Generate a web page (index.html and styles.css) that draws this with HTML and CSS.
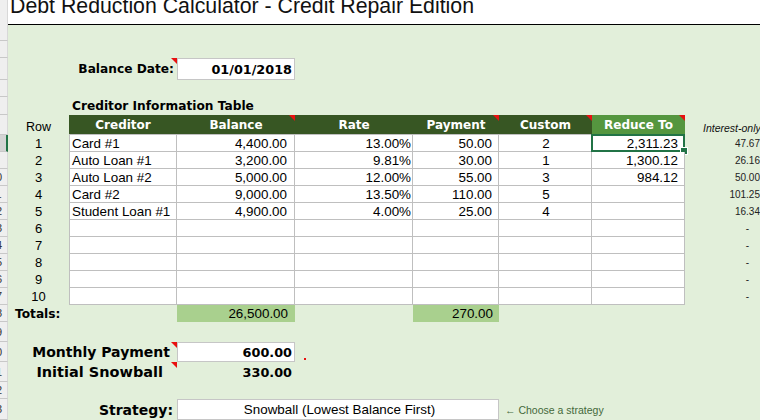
FILE: index.html
```html
<!DOCTYPE html>
<html>
<head>
<meta charset="utf-8">
<title>Debt Reduction Calculator</title>
<link rel="stylesheet" href="styles.css">
</head>
<body>
<div class="sheet">
  <div class="row r-title">
    <div class="hd top"></div>
    <div class="title-cell"><div class="title">Debt Reduction Calculator - Credit Repair Edition</div></div>
  </div>
  <div class="row h16"><div class="hd"></div></div>
  <div class="row h17"><div class="hd"></div></div>
  <div class="row h22">
    <div class="hd"></div>
    <div class="c r lbl-sm cm span-ab">Balance Date:</div>
    <div class="box r nb pad2">01/01/2018</div>
  </div>
  <div class="row h17"><div class="hd"></div></div>
  <div class="row h18">
    <div class="hd"></div>
    <div class="c lbl-md span-bd">Creditor Information Table</div>
  </div>
  <div class="row h20">
    <div class="hd"></div>
    <div class="c ctr rowlbl">Row</div>
    <div class="th">Creditor</div>
    <div class="th cm">Balance</div>
    <div class="th">Rate</div>
    <div class="th cm">Payment</div>
    <div class="th cm">Custom</div>
    <div class="th th2 cm">Reduce To</div>
    <div class="io-h">Interest-only</div>
  </div>

  <div class="row h17">
    <div class="hd sel-h"></div>
    <div class="c ctr rn">1</div>
    <div class="t first">Card #1</div>
    <div class="t r pad7">4,400.00</div>
    <div class="t r pad1">13.00%</div>
    <div class="t r pad6">50.00</div>
    <div class="t ctr">2</div>
    <div class="t r pad6 sel">2,311.23</div>
    <div class="c r io">47.67</div>
  </div>
  <div class="row h17">
    <div class="hd"></div>
    <div class="c ctr rn">2</div>
    <div class="t first">Auto Loan #1</div>
    <div class="t r pad7">3,200.00</div>
    <div class="t r pad1">9.81%</div>
    <div class="t r pad6">30.00</div>
    <div class="t ctr">1</div>
    <div class="t r pad6">1,300.12</div>
    <div class="c r io">26.16</div>
  </div>
  <div class="row h17">
    <div class="hd"><span>10</span></div>
    <div class="c ctr rn">3</div>
    <div class="t first">Auto Loan #2</div>
    <div class="t r pad7">5,000.00</div>
    <div class="t r pad1">12.00%</div>
    <div class="t r pad6">55.00</div>
    <div class="t ctr">3</div>
    <div class="t r pad6">984.12</div>
    <div class="c r io">50.00</div>
  </div>
  <div class="row h17">
    <div class="hd"><span>11</span></div>
    <div class="c ctr rn">4</div>
    <div class="t first">Card #2</div>
    <div class="t r pad7">9,000.00</div>
    <div class="t r pad1">13.50%</div>
    <div class="t r pad6">110.00</div>
    <div class="t ctr">5</div>
    <div class="t r pad6"></div>
    <div class="c r io">101.25</div>
  </div>
  <div class="row h17">
    <div class="hd"><span>12</span></div>
    <div class="c ctr rn">5</div>
    <div class="t first">Student Loan #1</div>
    <div class="t r pad7">4,900.00</div>
    <div class="t r pad1">4.00%</div>
    <div class="t r pad6">25.00</div>
    <div class="t ctr">4</div>
    <div class="t r pad6"></div>
    <div class="c r io">16.34</div>
  </div>
  <div class="row h17">
    <div class="hd"><span>13</span></div>
    <div class="c ctr rn">6</div>
    <div class="t first"></div><div class="t"></div><div class="t"></div><div class="t"></div><div class="t"></div><div class="t"></div>
    <div class="c r io dash">-</div>
  </div>
  <div class="row h17">
    <div class="hd"><span>14</span></div>
    <div class="c ctr rn">7</div>
    <div class="t first"></div><div class="t"></div><div class="t"></div><div class="t"></div><div class="t"></div><div class="t"></div>
    <div class="c r io dash">-</div>
  </div>
  <div class="row h17">
    <div class="hd"><span>15</span></div>
    <div class="c ctr rn">8</div>
    <div class="t first"></div><div class="t"></div><div class="t"></div><div class="t"></div><div class="t"></div><div class="t"></div>
    <div class="c r io dash">-</div>
  </div>
  <div class="row h17">
    <div class="hd"><span>16</span></div>
    <div class="c ctr rn">9</div>
    <div class="t first"></div><div class="t"></div><div class="t"></div><div class="t"></div><div class="t"></div><div class="t"></div>
    <div class="c r io dash">-</div>
  </div>
  <div class="row h17">
    <div class="hd"><span>17</span></div>
    <div class="c ctr rn">10</div>
    <div class="t first"></div><div class="t"></div><div class="t"></div><div class="t"></div><div class="t"></div><div class="t"></div>
    <div class="c r io dash">-</div>
  </div>

  <div class="row h17">
    <div class="hd"><span>18</span></div>
    <div class="c lbl-md tot">Totals:</div>
    <div></div>
    <div class="fill r pad7">26,500.00</div>
    <div></div>
    <div class="fill r pad6">270.00</div>
  </div>
  <div class="row h20"><div class="hd"><span>19</span></div></div>
  <div class="row h20">
    <div class="hd"><span>20</span></div>
    <div class="c r lbl-lg cm span-ab pr7">Monthly Payment</div>
    <div class="box r nb pad2">600.00</div>
    <div class="c"><i class="dot"></i></div>
  </div>
  <div class="row h20">
    <div class="hd"><span>21</span></div>
    <div class="c r lbl-lg lbl-wide cm span-ab pr13">Initial Snowball</div>
    <div class="c r nb pad3">330.00</div>
  </div>
  <div class="row h17"><div class="hd"><span>22</span></div></div>
  <div class="row h21">
    <div class="hd"><span>23</span></div>
    <div class="c r lbl-lg span-ab pr4">Strategy:</div>
    <div class="box ctr span-ce">Snowball (Lowest Balance First)</div>
    <div class="c hint col-f">&larr; Choose a strategy</div>
  </div>
</div>
</body>
</html>
```

FILE: styles.css
```css
* { box-sizing: border-box; }
html, body { margin: 0; padding: 0; }
body {
  width: 760px;
  height: 420px;
  overflow: hidden;
  background: #e2efda;
  font-family: "Liberation Sans", Arial, sans-serif;
  font-size: 13.4px;
  color: #000;
}
.sheet { width: 775px; }
.row {
  display: grid;
  grid-template-columns: 8px 61px 108px 118px 118px 86px 93px 93px 90px;
}
.row > div { min-width: 0; }

.h16 { height: 16px; }
.h17 { height: 17px; }
.h18 { height: 18px; }
.h20 { height: 20px; }
.h21 { height: 21px; }
.h22 { height: 22px; }

/* row header strip */
.hd {
  background: #efefef;
  border-bottom: 1px solid #c8c8c8;
  border-right: 1px solid #d8d8d8;
  overflow: hidden;
  display: flex;
  align-items: center;
  font-size: 11px;
  color: #333;
}
.hd span { flex: none; width: 24px; margin-left: -16px; text-align: center; }
.hd.top { border-bottom: none; }
.hd.sel-h { background: #d4d4d4; border-right: 2px solid #217346; }

/* title */
.r-title { grid-template-columns: 8px 1fr; height: 25px; }
.title-cell {
  background: #fff;
  border-bottom: 1px solid #000;
  overflow: hidden;
  padding-left: 2px;
}
.title {
  font-size: 21.3px;
  line-height: 24px;
  margin-top: -6px;
  white-space: nowrap;
  color: #111;
}

/* generic cells */
.c { display: flex; align-items: center; white-space: nowrap; padding: 0 3px; position: relative; }
.r { justify-content: flex-end; }
.ctr { justify-content: center; }
.pad1 { padding-right: 1px; }
.pad2 { padding-right: 2px; }
.pad3 { padding-right: 3px; }
.pad6 { padding-right: 6px; }
.pad7 { padding-right: 7px; }
.pr4 { padding-right: 4px; }
.pr7 { padding-right: 7px; }
.pr13 { padding-right: 14px; }

.span-ab { grid-column: 2 / 4; }
.span-bd { grid-column: 3 / 6; }
.span-ce { grid-column: 4 / 7; }
.col-f { grid-column: 7; }

.lbl-sm { font-family: "DejaVu Sans", sans-serif; font-weight: bold; font-size: 12.2px; }
.lbl-md { font-family: "DejaVu Sans", sans-serif; font-weight: bold; font-size: 12.2px; }
.lbl-lg { font-family: "DejaVu Sans", sans-serif; font-weight: bold; font-size: 14px; }
.lbl-wide { font-size: 14.5px; }
.nb { font-family: "DejaVu Sans", sans-serif; font-weight: bold; font-size: 12.8px; }
.tot { padding-left: 7px; }

.rowlbl { font-size: 12.5px; align-items: flex-end; padding-bottom: 1px; }
.rn { font-size: 13px; }

/* input-like boxes */
.box {
  display: flex;
  align-items: center;
  white-space: nowrap;
  background: #fff;
  border: 1px solid #c6c6c6;
  padding-left: 3px;
}

/* table */
.th {
  background: #375623;
  color: #fff;
  font-family: "DejaVu Sans", sans-serif;
  font-weight: bold;
  font-size: 12px;
  display: flex;
  align-items: center;
  justify-content: center;
  border-bottom: 1px solid #bfbfbf;
  position: relative;
  white-space: nowrap;
}
.th2 { background: #55963f; }
.t {
  background: #fff;
  border-right: 1px solid #bfbfbf;
  border-bottom: 1px solid #bfbfbf;
  display: flex;
  align-items: center;
  white-space: nowrap;
  padding-left: 2px;
  position: relative;
}
.t.first { border-left: 1px solid #bfbfbf; }

.sel::before {
  content: "";
  position: absolute;
  left: -1px; top: -1px; right: -1px; bottom: -1px;
  border: 2px solid #217346;
}
.sel::after {
  content: "";
  position: absolute;
  right: -4px; bottom: -4px;
  width: 6px; height: 6px;
  background: #217346;
  border: 1px solid #fff;
}

/* comment markers */
.cm { position: relative; }
.cm::after {
  content: "";
  position: absolute;
  top: 0; right: 0;
  width: 0; height: 0;
  border-top: 6px solid #e81010;
  border-left: 6px solid transparent;
}

/* interest-only column */
.io-h {
  font-style: italic;
  font-size: 10.5px;
  padding-left: 18px;
  display: flex;
  align-items: flex-end;
  padding-bottom: 1px;
  white-space: nowrap;
  color: #111;
}
.io { font-size: 10px; padding-right: 15px; color: #222; }
.io.dash { padding-right: 26px; }

/* totals fill */
.fill {
  background: #a9d08e;
  display: flex;
  align-items: center;
  white-space: nowrap;
}

.dot { display: block; width: 2px; height: 2px; background: #e81010; margin: 16px 0 0 6px; align-self: flex-start; }

.hint { font-size: 10.5px; color: #44693a; padding-left: 6px; overflow: visible; }
```
